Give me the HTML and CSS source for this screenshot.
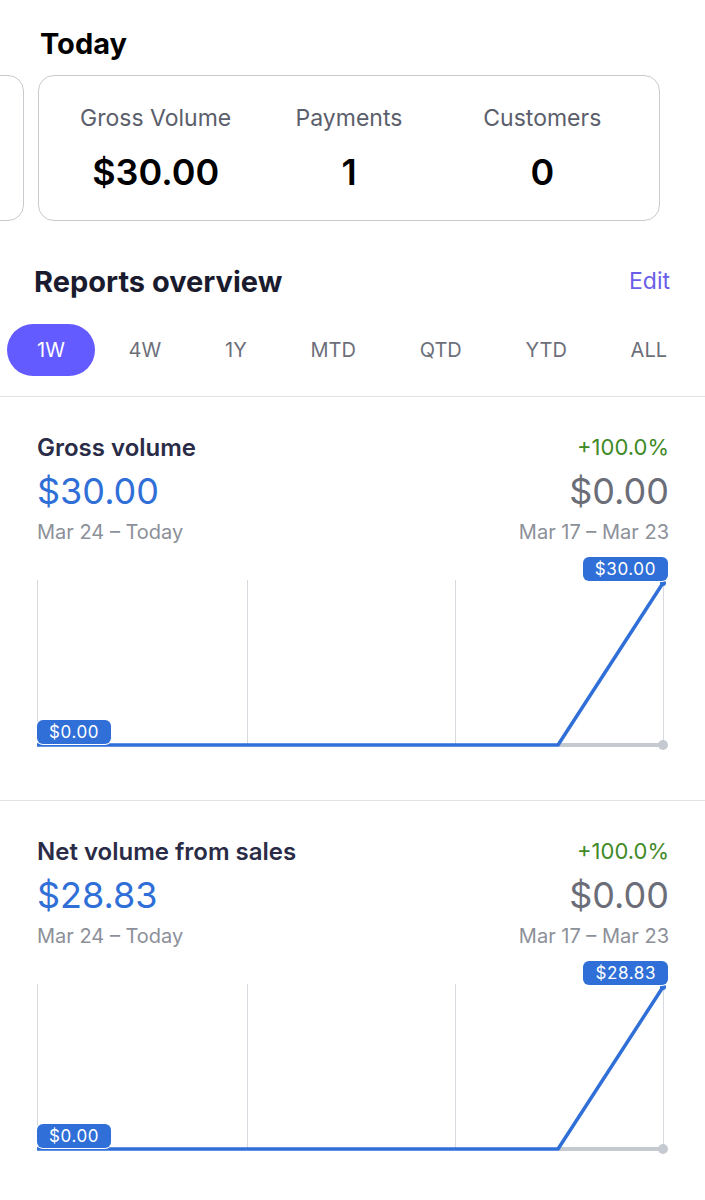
FILE: index.html
```html
<!DOCTYPE html>
<html lang="en">
<head>
    <meta charset="UTF-8">
    <meta name="viewport" content="width=device-width, initial-scale=1.0">
    <title>Home</title>
    <link rel="stylesheet" href="styles.css">
</head>
<body>
    <h1 class="today-title">Today</h1>

    <div class="card-row">
        <div class="summary-card summary-card-prev"></div>
        <div class="summary-card">
            <div class="stat">
                <div class="stat-label">Gross Volume</div>
                <div class="stat-value">$30.00</div>
            </div>
            <div class="stat">
                <div class="stat-label">Payments</div>
                <div class="stat-value">1</div>
            </div>
            <div class="stat">
                <div class="stat-label">Customers</div>
                <div class="stat-value">0</div>
            </div>
        </div>
    </div>

    <div class="reports-header">
        <h2>Reports overview</h2>
        <a href="#" class="edit-link">Edit</a>
    </div>

    <div class="tabs">
        <span class="tab active">1W</span>
        <span class="tab">4W</span>
        <span class="tab">1Y</span>
        <span class="tab">MTD</span>
        <span class="tab">QTD</span>
        <span class="tab">YTD</span>
        <span class="tab">ALL</span>
    </div>

    <!-- gross volume -->
    <div class="report">
        <div class="report-row">
            <span class="report-name">Gross volume</span>
            <span class="report-change">+100.0%</span>
        </div>
        <div class="report-row report-values">
            <span class="value-current">$30.00</span>
            <span class="value-previous">$0.00</span>
        </div>
        <div class="report-row report-dates">
            <span>Mar 24 – Today</span>
            <span>Mar 17 – Mar 23</span>
        </div>
        <div class="chart">
            <svg width="705" height="208" viewBox="0 0 705 208">
                <g stroke="#d6d9de" stroke-width="1">
                    <line x1="37.5" y1="28" x2="37.5" y2="193"/>
                    <line x1="247.5" y1="28" x2="247.5" y2="193"/>
                    <line x1="455.5" y1="28" x2="455.5" y2="193"/>
                    <line x1="663.5" y1="28" x2="663.5" y2="193"/>
                </g>
                <line x1="558" y1="193" x2="663" y2="193" stroke="#c5c9d0" stroke-width="4"/>
                <circle cx="663" cy="193" r="5" fill="#c5c9d0"/>
                <polyline points="37,193 558,193 663,31" fill="none" stroke="#2f6fd7" stroke-width="3.5" stroke-linejoin="round"/>
                <circle cx="663" cy="31" r="3" fill="#2f6fd7"/>
            </svg>
            <span class="chart-tag tag-top">$30.00</span>
            <span class="chart-tag tag-bottom">$0.00</span>
        </div>
    </div>

    <!-- net volume -->
    <div class="report">
        <div class="report-row">
            <span class="report-name">Net volume from sales</span>
            <span class="report-change">+100.0%</span>
        </div>
        <div class="report-row report-values">
            <span class="value-current">$28.83</span>
            <span class="value-previous">$0.00</span>
        </div>
        <div class="report-row report-dates">
            <span>Mar 24 – Today</span>
            <span>Mar 17 – Mar 23</span>
        </div>
        <div class="chart">
            <svg width="705" height="208" viewBox="0 0 705 208">
                <g stroke="#d6d9de" stroke-width="1">
                    <line x1="37.5" y1="28" x2="37.5" y2="193"/>
                    <line x1="247.5" y1="28" x2="247.5" y2="193"/>
                    <line x1="455.5" y1="28" x2="455.5" y2="193"/>
                    <line x1="663.5" y1="28" x2="663.5" y2="193"/>
                </g>
                <line x1="558" y1="193" x2="663" y2="193" stroke="#c5c9d0" stroke-width="4"/>
                <circle cx="663" cy="193" r="5" fill="#c5c9d0"/>
                <polyline points="37,193 558,193 663,31" fill="none" stroke="#2f6fd7" stroke-width="3.5" stroke-linejoin="round"/>
                <circle cx="663" cy="31" r="3" fill="#2f6fd7"/>
            </svg>
            <span class="chart-tag tag-top">$28.83</span>
            <span class="chart-tag tag-bottom">$0.00</span>
        </div>
    </div>
</body>
</html>
```

FILE: styles.css
```css
body {
    font-family: Inter, "Noto Sans", Arial, sans-serif;
    background: white;
    margin: 0;
    overflow-x: hidden;
}

.today-title {
    margin: 0;
    padding: 27px 0 0 40px;
    font-size: 29px;
    line-height: 34px;
    font-weight: 700;
    color: #000;
}

.card-row {
    display: flex;
    gap: 14px;
    margin-top: 14px;
}

.summary-card {
    flex: 0 0 622px;
    box-sizing: border-box;
    height: 146px;
    padding: 0 20px;
    border: 1.5px solid #c9cacf;
    border-radius: 16px;
    display: grid;
    grid-template-columns: repeat(3, 1fr);
}

.summary-card-prev {
    flex: 0 0 200px;
    margin-left: -176px;
}

.stat {
    text-align: center;
    padding-top: 27px;
}

.stat-label {
    font-size: 23px;
    line-height: 30px;
    color: #5b5e6b;
}

.stat-value {
    margin-top: 18px;
    font-size: 36px;
    line-height: 42px;
    font-weight: 600;
    color: #000;
}

.reports-header {
    display: flex;
    justify-content: space-between;
    align-items: center;
    margin-top: 43px;
    padding: 0 35px 0 34px;
    height: 34px;
}

.reports-header h2 {
    margin: 0;
    font-size: 29px;
    font-weight: 700;
    color: #1a1b2e;
}

.edit-link {
    color: #6a5ee9;
    font-size: 23px;
    text-decoration: none;
}

.tabs {
    display: flex;
    justify-content: space-between;
    margin: 26px 8px 0 7px;
}

.tab {
    height: 52px;
    line-height: 52px;
    padding: 0 30px;
    border-radius: 26px;
    font-size: 20px;
    color: #6c6f7a;
}

.tab.active {
    background: #635bff;
    color: white;
}

.report {
    border-top: 1px solid #e1e2e6;
    margin-top: 20px;
    padding: 36px 36px 0 37px;
    height: 367px;
}

.report + .report {
    margin-top: 0;
}

.report-row {
    display: flex;
    justify-content: space-between;
    align-items: center;
    height: 28px;
}

.report-name {
    font-size: 24px;
    font-weight: 600;
    color: #2a2c47;
}

.report-change {
    font-size: 22px;
    color: #3f8a27;
}

.report-values {
    height: 40px;
    margin-top: 10px;
    font-size: 36px;
}

.value-current {
    color: #2f6fd7;
}

.value-previous {
    color: #6b6e78;
}

.report-dates {
    height: 24px;
    margin-top: 9px;
    font-size: 20px;
    color: #8c9099;
}

.chart {
    position: relative;
    margin: 8px -36px 0 -37px;
    height: 208px;
}

.chart svg {
    display: block;
}

.chart-tag {
    position: absolute;
    height: 24px;
    line-height: 24px;
    padding: 0 12px;
    border-radius: 6px;
    background: #2f6fd7;
    color: white;
    font-size: 17px;
    letter-spacing: 0.6px;
    box-shadow: 0 0 0 1px white;
}

.tag-top {
    top: 5px;
    right: 37px;
}

.tag-bottom {
    top: 168px;
    left: 37px;
}
```
